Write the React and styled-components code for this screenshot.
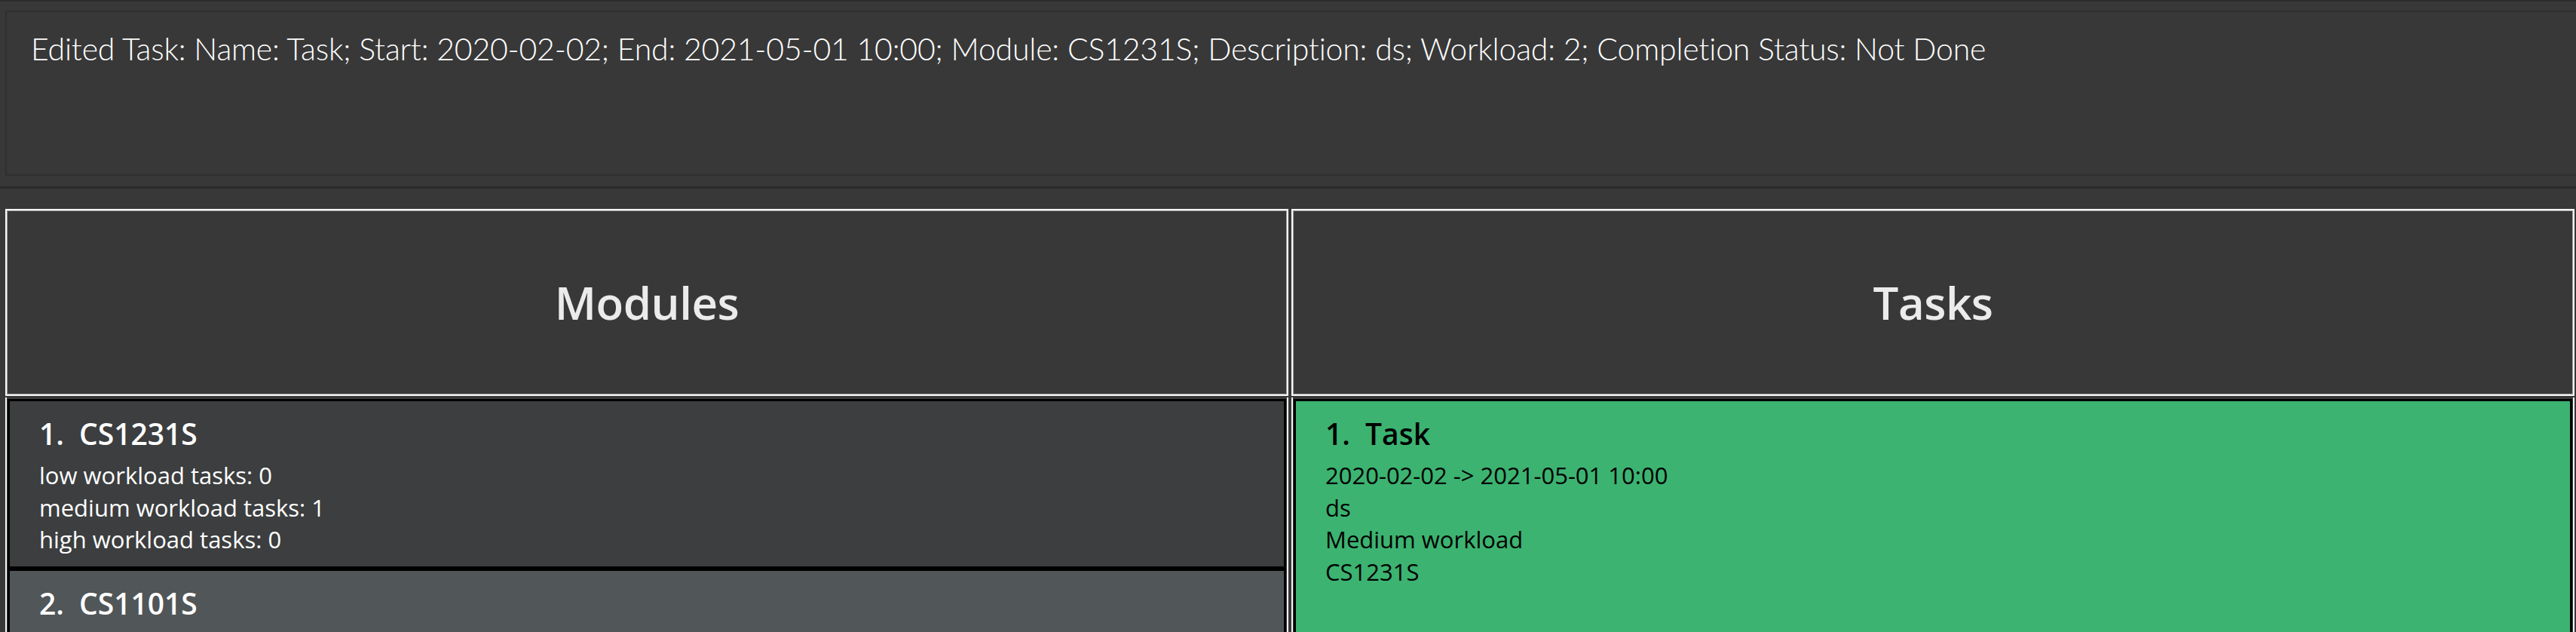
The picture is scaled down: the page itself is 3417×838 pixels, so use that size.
import React from 'react'
import styled, { createGlobalStyle } from 'styled-components'

const GlobalStyle = createGlobalStyle`
  html, body {
    margin: 0;
    padding: 0;
    background: #383838;
    overflow: hidden;
  }
  body {
    font-family: 'Open Sans', 'Noto Sans', sans-serif;
  }
`

const modules = [
  { name: 'CS1231S', low: 0, medium: 1, high: 0 },
  { name: 'CS1101S', low: 0, medium: 0, high: 0 },
]

const tasks = [
  {
    name: 'Task',
    range: '2020-02-02 -> 2021-05-01 10:00',
    description: 'ds',
    workload: 'Medium workload',
    module: 'CS1231S',
  },
]

const Window = styled.div`
  width: 3417px;
  height: 838px;
  overflow: hidden;
  box-sizing: border-box;
  background: #383838;
  border-top: 2px solid #2c2c2c;
`

const ResultDisplay = styled.div`
  margin: 12px 0 0 7px;
  height: 219px;
  box-sizing: border-box;
  border: 2px solid #2f2f2f;
  border-right: none;
  padding: 24px 0 0 32px;
  color: #ffffff;
  font-family: Lato, 'Open Sans', sans-serif;
  font-weight: 300;
  font-size: 41px;
  letter-spacing: -0.2px;
  line-height: 1.2;
  white-space: nowrap;
`

const Splitter = styled.div`
  margin-top: 14px;
  height: 3px;
  background: #2a2a2a;
`

const Panels = styled.div`
  margin: 27px 2px 0 7px;
  display: grid;
  grid-template-columns: 1fr 1fr;
  column-gap: 4px;
`

const Column = styled.div`
  display: flex;
  flex-direction: column;
`

const PanelHeader = styled.div`
  height: 248px;
  box-sizing: border-box;
  border: 2px solid #f7f7f7;
  box-shadow: inset 0 0 0 1px #a0a0a0;
  display: flex;
  align-items: center;
  justify-content: center;
  color: #ebebeb;
  font-weight: 600;
  font-size: 60px;
  letter-spacing: -0.5px;
`

const ListView = styled.div`
  margin-top: 2px;
  border-left: 2px solid #f4f4f4;
  border-right: 2px solid #f4f4f4;
  padding: 2px 1px 0;
  display: flex;
  flex-direction: column;
`

const Cell = styled.div`
  border: 3px solid #000;
  background: ${(p) => p.$bg};
  color: ${(p) => p.$fg};
  padding: 20px 0 14px 39px;
  min-height: ${(p) => p.$minHeight || 0}px;
`

const Title = styled.div`
  display: flex;
  gap: 20px;
  font-weight: 600;
  font-size: 39px;
  line-height: 46px;
  margin-bottom: 11px;
`

const Line = styled.div`
  font-size: 31px;
  line-height: 42.5px;
`

const App = () => (
  <Window>
    <GlobalStyle />
    <ResultDisplay>
      Edited Task: Name: Task; Start: 2020-02-02; End: 2021-05-01 10:00; Module: CS1231S; Description: ds;
      Workload: 2; Completion Status: Not Done
    </ResultDisplay>
    <Splitter />
    <Panels>
      <Column>
        <PanelHeader>Modules</PanelHeader>
        <ListView>
          {modules.map((m, i) => (
            <Cell key={m.name} $bg={i % 2 === 0 ? '#3c3e3f' : '#515658'} $fg="#ffffff">
              <Title>
                <span>{i + 1}.</span>
                <span>{m.name}</span>
              </Title>
              <Line>low workload tasks: {m.low}</Line>
              <Line>medium workload tasks: {m.medium}</Line>
              <Line>high workload tasks: {m.high}</Line>
            </Cell>
          ))}
        </ListView>
      </Column>
      <Column>
        <PanelHeader>Tasks</PanelHeader>
        <ListView>
          {tasks.map((t, i) => (
            <Cell key={t.name} $bg="#3cb371" $fg="#000000" $minHeight={300}>
              <Title>
                <span>{i + 1}.</span>
                <span>{t.name}</span>
              </Title>
              <Line>{t.range}</Line>
              <Line>{t.description}</Line>
              <Line>{t.workload}</Line>
              <Line>{t.module}</Line>
            </Cell>
          ))}
        </ListView>
      </Column>
    </Panels>
  </Window>
)

export default App
